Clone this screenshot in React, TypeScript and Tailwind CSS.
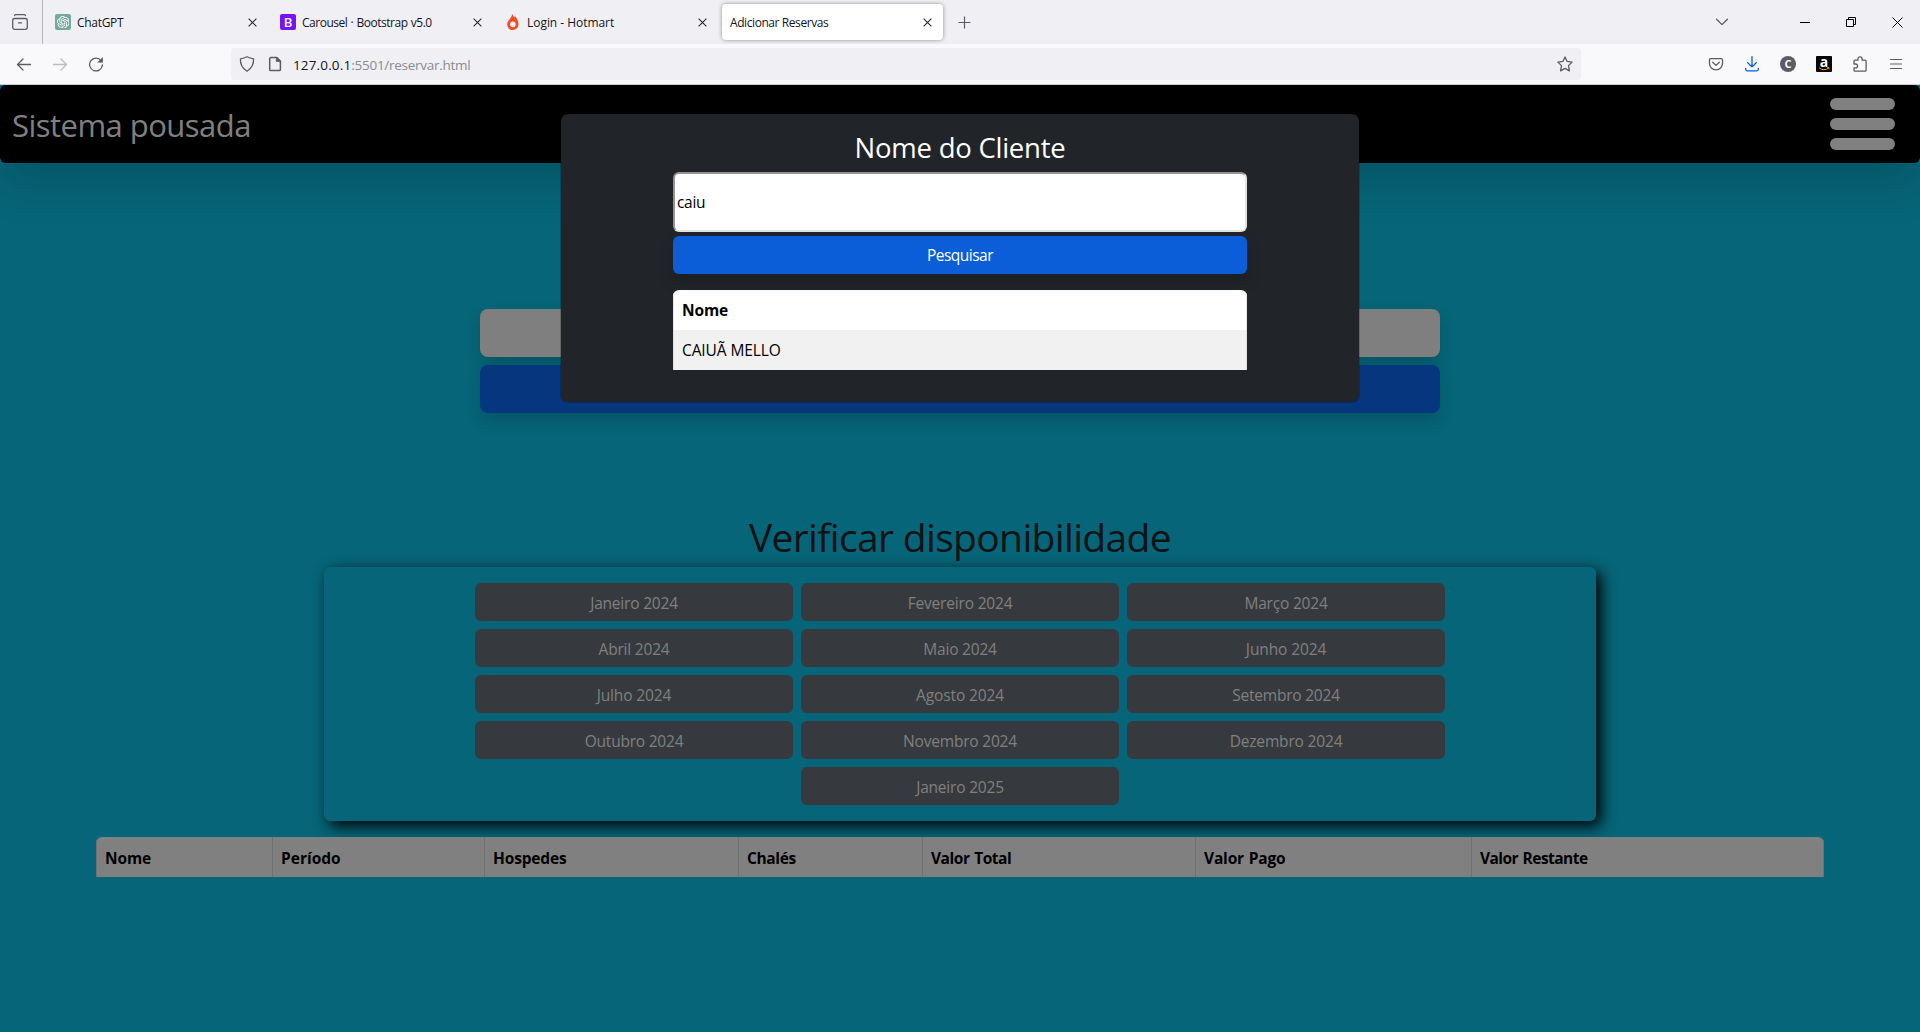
import type { ReactNode } from "react";
import { SiOpenai } from "react-icons/si";

const CloseIcon = () => (
  <svg width="9" height="9" viewBox="0 0 9 9" fill="none" stroke="#2b2a33" strokeWidth="1.1">
    <path d="M0.6 0.6 8.4 8.4M8.4 0.6 0.6 8.4" />
  </svg>
);

const HotmartIcon = () => (
  <svg width="16" height="16" viewBox="0 0 16 16">
    <path
      fill="#f04e23"
      fillRule="evenodd"
      d="M7.6 0c.3 1.6 1 2.4 1.8 3.2.2-.3.4-.7.4-1.100 1.800 1.700 3.700 4.900 3.700 8 0 3.500-2.400 5.900-5.700 5.900S2.200 13.600 2.200 10.300C2.200 6.600 5.400 5.400 6.300 2.500 6.700 1.700 7.200 1 7.600 0ZM7.900 7.400a2.800 2.900 0 1 0 0 5.800 2.800 2.900 0 0 0 0-5.800Z"
    />
  </svg>
);

function Tab({ icon, title, textClass, active }: { icon?: ReactNode; title: string; textClass: string; active?: boolean }) {
  return (
    <div className="flex h-11 w-[225px] shrink-0 items-center pr-1">
      <div
        className={
          active
            ? "flex h-9 w-[221px] items-center rounded bg-white pr-[11px] pl-2 shadow-[0_0_4px_rgba(0,0,0,0.4)]"
            : "flex h-9 w-[221px] items-center pr-[11px] pl-2"
        }
      >
        {icon && <div className="mr-1.5 h-4 w-4">{icon}</div>}
        <span className={`grow pt-px text-[12px] leading-4 whitespace-nowrap text-[#15141a] ${textClass}`}>{title}</span>
        <CloseIcon />
      </div>
    </div>
  );
}

function ToolButton({ children }: { children: ReactNode }) {
  return <div className="flex h-8 w-9 shrink-0 items-center justify-center">{children}</div>;
}

const stroke = { fill: "none", stroke: "#5b5b66", strokeWidth: 1.3, strokeLinecap: "round", strokeLinejoin: "round" } as const;

function TabStrip() {
  return (
    <div className="flex h-11 items-center bg-[#f0f0f4]">
      <div className="flex h-11 w-[43px] shrink-0 items-center border-r border-[#b5b5ba] pl-3">
        <svg width="16" height="16" viewBox="0 0 16 16" {...stroke}>
          <path d="M2.6 1.500Q3 .7 3.800.7h8.400q.8 0 1.200.8" />
          <rect x=".7" y="4.500" width="14.600" height="10.800" rx="2" />
          <path d="M6.500 8.800h3" />
        </svg>
      </div>
      <div className="ml-1 flex">
        <Tab
          title="ChatGPT"
          textClass="tracking-[-0.3px]"
          icon={
            <div className="flex h-4 w-4 items-center justify-center rounded-[2px] bg-[#75a99c]">
              <SiOpenai size={12.500} color="#fff" />
            </div>
          }
        />
        <Tab
          title="Carousel · Bootstrap v5.0"
          textClass="tracking-[-0.48px] [word-spacing:0.6px]"
          icon={
            <div className="flex h-4 w-4 items-center justify-center rounded-[2px] bg-[#7a12f8] text-[13px] leading-4 font-semibold text-white">
              B
            </div>
          }
        />
        <Tab title="Login - Hotmart" textClass="tracking-[-0.04px]" icon={<HotmartIcon />} />
        <Tab title="Adicionar Reservas" textClass="tracking-[-0.42px]" active />
      </div>
      <svg className="ml-[11px]" width="13" height="13" viewBox="0 0 13 13" stroke="#5b5b66" strokeWidth="1.200">
        <path d="M6.500.5v12M.5 6.500h12" />
      </svg>
      <div className="flex grow items-center justify-end pr-[17px]">
        <svg className="mr-[72px]" width="12" height="8" viewBox="0 0 12 8" {...stroke}>
          <path d="M.6 1.200 6 6.600l5.400-5.400" />
        </svg>
        <div className="mr-9 h-px w-[10px] bg-black" />
        <svg className="mr-9" width="10" height="10" viewBox="0 0 10 10" fill="none" stroke="#000">
          <path d="M.5 2.500h7v7h-7zM2.500 2.500v-2h7v7h-2" />
        </svg>
        <svg width="11" height="11" viewBox="0 0 11 11" stroke="#000" strokeWidth="1">
          <path d="M.5.500l10 10M10.500.500l-10 10" />
        </svg>
      </div>
    </div>
  );
}

function Toolbar() {
  return (
    <div className="flex h-[41px] items-center border-b border-[#ccccd0] bg-[#f9f9fb] pl-1.5">
      <ToolButton>
        <svg width="16" height="16" viewBox="0 0 16 16" {...stroke}>
          <path d="M14.500 8.500h-13M7 3 1.500 8.500 7 14" />
        </svg>
      </ToolButton>
      <ToolButton>
        <svg width="16" height="16" viewBox="0 0 16 16" {...stroke} stroke="#bcbcc2">
          <path d="M1.500 8.500h13M9 3l5.500 5.500L9 14" />
        </svg>
      </ToolButton>
      <ToolButton>
        <svg width="16" height="16" viewBox="0 0 16 16" {...stroke}>
          <path d="M13 4.500A6.400 6.400 0 1 0 14.400 9" />
          <path d="M14.600 1.800v4.500H10.100z" fill="#5b5b66" strokeWidth=".6" />
        </svg>
      </ToolButton>
      <div className="ml-[117px] flex h-8 w-[1350px] items-center rounded bg-[#f0f0f4] pr-2 pl-2">
        <svg width="16" height="16" viewBox="0 0 16 16" {...stroke}>
          <path d="M8 .8Q10.800 2.300 14.600 2.800 15 11 8 15.200 1 11 1.400 2.800 5.200 2.300 8 .8Z" />
        </svg>
        <svg className="ml-3" width="16" height="16" viewBox="0 0 16 16" {...stroke} strokeWidth="1.500">
          <path d="M3.800 1.500h6l3.600 3.600v8.300q0 1.100-1.100 1.100H3.800q-1.100 0-1.100-1.100V2.600q0-1.100 1.100-1.100Z" />
          <path d="M9.300 1.500v4h4z" fill="#5b5b66" strokeWidth=".8" />
        </svg>
        <div className="ml-[10px] grow pt-0.5 text-[13.500px] leading-5 whitespace-nowrap text-[#8a8a90]">
          <span className="tracking-[0.15px] text-[#15141a]">127.0.0.1</span>
          <span className="tracking-[-0.28px]">:5501/reservar.html</span>
        </div>
        <svg width="16" height="16" viewBox="0 0 16 16" {...stroke}>
          <path d="M8 .9l2.100 4.500 5 .7-3.600 3.500.9 5.300L8 12.400l-4.400 2.500.9-5.300L.9 6.100l5-.7z" />
        </svg>
      </div>
      <div className="flex grow justify-end pr-1.5">
        <ToolButton>
          <svg width="16" height="16" viewBox="0 0 16 16" {...stroke}>
            <path d="M2.800 2.600h10.400q1.300 0 1.300 1.300v3.600a6.500 6.300 0 0 1-13 0V3.900q0-1.300 1.300-1.300Z" />
            <path d="M4.700 6.300 8 9.400l3.300-3.100" />
          </svg>
        </ToolButton>
        <ToolButton>
          <svg width="16" height="16" viewBox="0 0 16 16" {...stroke} stroke="#0061e0">
            <path d="M8 .6v9.900M3.700 6.700 8 10.900l4.300-4.200M1.700 12.500v.8q0 1.500 1.500 1.500h9.600q1.500 0 1.500-1.500v-.8" />
          </svg>
        </ToolButton>
        <ToolButton>
          <div className="flex h-4 w-4 items-center justify-center rounded-full bg-[#5b5b66] text-[11px] leading-4 font-bold text-white">
            C
          </div>
        </ToolButton>
        <ToolButton>
          <div className="relative flex h-4 w-4 justify-center rounded-[1px] bg-black text-[14px] leading-[12px] font-bold text-white">
            a
            <svg className="absolute bottom-[1px] left-[2px]" width="12" height="4" viewBox="0 0 12 4" fill="none" stroke="#f90" strokeWidth="1">
              <path d="M1 .8Q6 4.600 10.800 1M9 .7h2v1.600" />
            </svg>
          </div>
        </ToolButton>
        <ToolButton>
          <svg width="16" height="16" viewBox="0 0 16 16" {...stroke}>
            <path d="M2 8V5.200q0-1 1-1h2.900V2.900a2.100 2.100 0 0 1 4.200 0v1.300h3q1 0 1 1v9q0 1-1 1H3q-1 0-1-1v-2.300h1.600a1.950 1.950 0 0 0 0-3.900Z" />
          </svg>
        </ToolButton>
        <ToolButton>
          <svg width="16" height="16" viewBox="0 0 16 16" {...stroke} strokeWidth="1.200">
            <path d="M2.500 3.500h11M2.500 8h11M2.500 12.500h11" />
          </svg>
        </ToolButton>
      </div>
    </div>
  );
}

const months: [string, string][] = [
  ["Janeiro 2024", "tracking-[-0.2px]"],
  ["Fevereiro 2024", "tracking-[-0.18px]"],
  ["Março 2024", "tracking-[-0.2px]"],
  ["Abril 2024", "tracking-[-0.2px]"],
  ["Maio 2024", "tracking-[-0.2px]"],
  ["Junho 2024", "tracking-[-0.12px]"],
  ["Julho 2024", "tracking-[-0.12px]"],
  ["Agosto 2024", "tracking-[-0.12px]"],
  ["Setembro 2024", "tracking-[-0.21px]"],
  ["Outubro 2024", "tracking-[-0.22px]"],
  ["Novembro 2024", "tracking-[-0.2px]"],
  ["Dezembro 2024", "tracking-[-0.17px]"],
  ["Janeiro 2025", "tracking-[-0.2px]"],
];

const columns: [string, string][] = [
  ["Nome", "w-[176px] tracking-[-0.14px]"],
  ["Período", "w-[212px] tracking-[0px]"],
  ["Hospedes", "w-[254px] tracking-[-0.16px]"],
  ["Chalés", "w-[184px] tracking-[-0.36px]"],
  ["Valor Total", "w-[273px] tracking-[-0.45px] [word-spacing:1px]"],
  ["Valor Pago", "w-[276px] tracking-[-0.18px] [word-spacing:1px]"],
  ["Valor Restante", "w-[353px] border-r tracking-[-0.54px] [word-spacing:1px]"],
];

function SearchModal() {
  return (
    <div className="absolute top-7 left-1/2 flex h-[290px] w-[800px] -translate-x-1/2 flex-col items-center rounded-lg border border-black/20 bg-[#212529] bg-clip-padding pt-[17px]">
      <h4 className="mb-[7px] text-[27.500px] leading-[34px] tracking-[-0.250px] text-white">Nome do Cliente</h4>
      <div className="mb-1 flex h-[60px] w-[574px] items-center rounded-[6px] border-2 border-t-[#949494] border-r-[#e3e3e3] border-b-[#e3e3e3] border-l-[#949494] bg-white pt-0.5 pl-0.5 text-[15.500px] tracking-[-0.300px] text-black">
        caiu
      </div>
      <button className="relative mb-4 flex h-[38px] w-[574px] items-center justify-center rounded-[6px] bg-[#0b5ed7] pt-0.5 text-[15.500px] tracking-[-0.520px] text-white shadow-[0_8px_16px_rgba(0,0,0,0.150)]">
        Pesquisar
      </button>
      <div className="w-[574px] overflow-hidden rounded-t-[6px] text-[15.500px] leading-6 text-black">
        <div className="h-10 border-x border-[#e6e6e6] bg-white px-2 pt-2 font-bold tracking-[-0.140px]">Nome</div>
        <div className="h-10 border-x border-[#e0e0e0] bg-[#f1f1f1] px-2 pt-2 tracking-[-0.100px]">CAIUÃ MELLO</div>
      </div>
    </div>
  );
}

export default function App() {
  return (
    <div className="flex h-[1032px] w-[1920px] flex-col overflow-hidden font-['Open_Sans','Noto_Sans',sans-serif]">
      <TabStrip />
      <Toolbar />
      <main className="relative flex grow flex-col items-center overflow-hidden bg-[#066578]">
        <header className="flex h-[78px] w-full shrink-0 items-center justify-between rounded-[6px] bg-black pr-[25px] pl-3 shadow-[0_16px_48px_rgba(0,0,0,0.175)]">
          <span className="pt-0.5 text-[31px] tracking-[-0.530px] text-[#808080]">Sistema pousada</span>
          <div className="flex flex-col gap-2">
            <div className="h-3 w-[65px] rounded-full bg-[#808080]" />
            <div className="h-3 w-[65px] rounded-full bg-[#808080]" />
            <div className="h-3 w-[65px] rounded-full bg-[#808080]" />
          </div>
        </header>

        <div className="mt-[146px] flex flex-col gap-2">
          <div className="h-12 w-[960px] rounded-lg bg-[#7f7f7f] shadow-[0_8px_16px_rgba(0,0,0,0.150)]" />
          <div className="h-12 w-[960px] rounded-lg bg-[#05367e] shadow-[0_8px_16px_rgba(0,0,0,0.150)]" />
        </div>

        <h1 className="mt-[100px] mb-1.5 text-[39px] leading-[48px] tracking-[-0.650px] text-[#101214]">Verificar disponibilidade</h1>

        <section className="flex h-[254px] w-[1272px] shrink-0 flex-wrap content-start justify-center gap-2 rounded-[6px] bg-[#066578] px-[140px] pt-4 shadow-[5px_5px_15px_#000]">
          {months.map(([label, tracking]) => (
            <button
              key={label}
              className={`flex h-[38px] w-[318px] items-center justify-center rounded-[6px] bg-[#363a3e] pt-[3px] text-[15.500px] text-[#808080] ${tracking}`}
            >
              {label}
            </button>
          ))}
        </section>

        <div className="relative mt-4 flex h-10 w-[1728px] shrink-0 overflow-hidden rounded-t-[6px] bg-[#808080]">
          {columns.map(([label, cls]) => (
            <div key={label} className={`border-l border-[#6f7071] pt-[9px] pl-2 text-[15.500px] leading-6 font-bold text-black ${cls}`}>
              {label}
            </div>
          ))}
        </div>

        <SearchModal />
      </main>
    </div>
  );
}
